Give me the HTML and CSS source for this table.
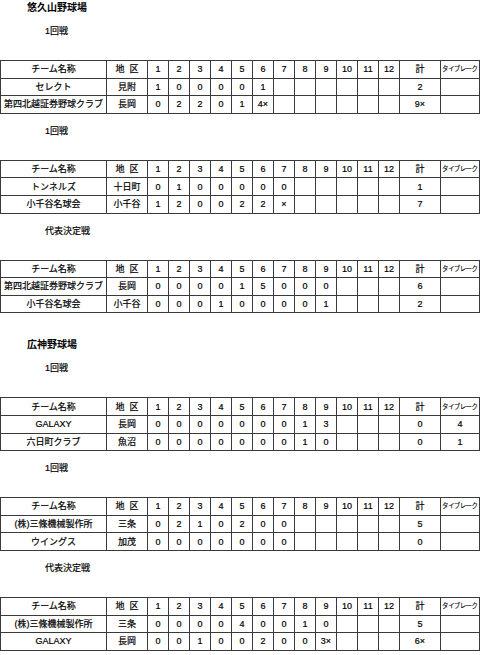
FILE: index.html
```html
<!DOCTYPE html>
<html lang="ja">
<head>
<meta charset="utf-8">
<title>試合結果</title>
<link rel="stylesheet" href="styles.css">
</head>
<body>
<section class="venue">
  <h1 class="venue-title">悠久山野球場</h1>

  <h2 class="round">1回戦</h2>
  <table class="score">
    <colgroup><col class="c-team"><col class="c-area"><col class="c-inn"><col class="c-inn"><col class="c-inn"><col class="c-inn"><col class="c-inn"><col class="c-inn"><col class="c-inn"><col class="c-inn"><col class="c-inn"><col class="c-inn"><col class="c-inn"><col class="c-inn"><col class="c-total"><col class="c-tb"></colgroup>
    <tr><th>チーム名称</th><th>地&nbsp;&nbsp;区</th><th>1</th><th>2</th><th>3</th><th>4</th><th>5</th><th>6</th><th>7</th><th>8</th><th>9</th><th>10</th><th>11</th><th>12</th><th>計</th><th class="tb">タイブレーク</th></tr>
    <tr><td>セレクト</td><td>見附</td><td>1</td><td>0</td><td>0</td><td>0</td><td>0</td><td>1</td><td></td><td></td><td></td><td></td><td></td><td></td><td>2</td><td></td></tr>
    <tr><td>第四北越証券野球クラブ</td><td>長岡</td><td>0</td><td>2</td><td>2</td><td>0</td><td>1</td><td>4×</td><td></td><td></td><td></td><td></td><td></td><td></td><td>9×</td><td></td></tr>
  </table>

  <h2 class="round">1回戦</h2>
  <table class="score">
    <colgroup><col class="c-team"><col class="c-area"><col class="c-inn"><col class="c-inn"><col class="c-inn"><col class="c-inn"><col class="c-inn"><col class="c-inn"><col class="c-inn"><col class="c-inn"><col class="c-inn"><col class="c-inn"><col class="c-inn"><col class="c-inn"><col class="c-total"><col class="c-tb"></colgroup>
    <tr><th>チーム名称</th><th>地&nbsp;&nbsp;区</th><th>1</th><th>2</th><th>3</th><th>4</th><th>5</th><th>6</th><th>7</th><th>8</th><th>9</th><th>10</th><th>11</th><th>12</th><th>計</th><th class="tb">タイブレーク</th></tr>
    <tr><td>トンネルズ</td><td>十日町</td><td>0</td><td>1</td><td>0</td><td>0</td><td>0</td><td>0</td><td>0</td><td></td><td></td><td></td><td></td><td></td><td>1</td><td></td></tr>
    <tr><td>小千谷名球会</td><td>小千谷</td><td>1</td><td>2</td><td>0</td><td>0</td><td>2</td><td>2</td><td>×</td><td></td><td></td><td></td><td></td><td></td><td>7</td><td></td></tr>
  </table>

  <h2 class="round">代表決定戦</h2>
  <table class="score">
    <colgroup><col class="c-team"><col class="c-area"><col class="c-inn"><col class="c-inn"><col class="c-inn"><col class="c-inn"><col class="c-inn"><col class="c-inn"><col class="c-inn"><col class="c-inn"><col class="c-inn"><col class="c-inn"><col class="c-inn"><col class="c-inn"><col class="c-total"><col class="c-tb"></colgroup>
    <tr><th>チーム名称</th><th>地&nbsp;&nbsp;区</th><th>1</th><th>2</th><th>3</th><th>4</th><th>5</th><th>6</th><th>7</th><th>8</th><th>9</th><th>10</th><th>11</th><th>12</th><th>計</th><th class="tb">タイブレーク</th></tr>
    <tr><td>第四北越証券野球クラブ</td><td>長岡</td><td>0</td><td>0</td><td>0</td><td>0</td><td>1</td><td>5</td><td>0</td><td>0</td><td>0</td><td></td><td></td><td></td><td>6</td><td></td></tr>
    <tr><td>小千谷名球会</td><td>小千谷</td><td>0</td><td>0</td><td>0</td><td>1</td><td>0</td><td>0</td><td>0</td><td>0</td><td>1</td><td></td><td></td><td></td><td>2</td><td></td></tr>
  </table>
</section>

<section class="venue">
  <h1 class="venue-title">広神野球場</h1>

  <h2 class="round">1回戦</h2>
  <table class="score">
    <colgroup><col class="c-team"><col class="c-area"><col class="c-inn"><col class="c-inn"><col class="c-inn"><col class="c-inn"><col class="c-inn"><col class="c-inn"><col class="c-inn"><col class="c-inn"><col class="c-inn"><col class="c-inn"><col class="c-inn"><col class="c-inn"><col class="c-total"><col class="c-tb"></colgroup>
    <tr><th>チーム名称</th><th>地&nbsp;&nbsp;区</th><th>1</th><th>2</th><th>3</th><th>4</th><th>5</th><th>6</th><th>7</th><th>8</th><th>9</th><th>10</th><th>11</th><th>12</th><th>計</th><th class="tb">タイブレーク</th></tr>
    <tr><td>GALAXY</td><td>長岡</td><td>0</td><td>0</td><td>0</td><td>0</td><td>0</td><td>0</td><td>0</td><td>1</td><td>3</td><td></td><td></td><td></td><td>0</td><td>4</td></tr>
    <tr><td>六日町クラブ</td><td>魚沼</td><td>0</td><td>0</td><td>0</td><td>0</td><td>0</td><td>0</td><td>0</td><td>1</td><td>0</td><td></td><td></td><td></td><td>0</td><td>1</td></tr>
  </table>

  <h2 class="round">1回戦</h2>
  <table class="score">
    <colgroup><col class="c-team"><col class="c-area"><col class="c-inn"><col class="c-inn"><col class="c-inn"><col class="c-inn"><col class="c-inn"><col class="c-inn"><col class="c-inn"><col class="c-inn"><col class="c-inn"><col class="c-inn"><col class="c-inn"><col class="c-inn"><col class="c-total"><col class="c-tb"></colgroup>
    <tr><th>チーム名称</th><th>地&nbsp;&nbsp;区</th><th>1</th><th>2</th><th>3</th><th>4</th><th>5</th><th>6</th><th>7</th><th>8</th><th>9</th><th>10</th><th>11</th><th>12</th><th>計</th><th class="tb">タイブレーク</th></tr>
    <tr><td>(株)三條機械製作所</td><td>三条</td><td>0</td><td>2</td><td>1</td><td>0</td><td>2</td><td>0</td><td>0</td><td></td><td></td><td></td><td></td><td></td><td>5</td><td></td></tr>
    <tr><td>ウイングス</td><td>加茂</td><td>0</td><td>0</td><td>0</td><td>0</td><td>0</td><td>0</td><td>0</td><td></td><td></td><td></td><td></td><td></td><td>0</td><td></td></tr>
  </table>

  <h2 class="round">代表決定戦</h2>
  <table class="score">
    <colgroup><col class="c-team"><col class="c-area"><col class="c-inn"><col class="c-inn"><col class="c-inn"><col class="c-inn"><col class="c-inn"><col class="c-inn"><col class="c-inn"><col class="c-inn"><col class="c-inn"><col class="c-inn"><col class="c-inn"><col class="c-inn"><col class="c-total"><col class="c-tb"></colgroup>
    <tr><th>チーム名称</th><th>地&nbsp;&nbsp;区</th><th>1</th><th>2</th><th>3</th><th>4</th><th>5</th><th>6</th><th>7</th><th>8</th><th>9</th><th>10</th><th>11</th><th>12</th><th>計</th><th class="tb">タイブレーク</th></tr>
    <tr><td>(株)三條機械製作所</td><td>三条</td><td>0</td><td>0</td><td>0</td><td>0</td><td>4</td><td>0</td><td>0</td><td>1</td><td>0</td><td></td><td></td><td></td><td>5</td><td></td></tr>
    <tr><td>GALAXY</td><td>長岡</td><td>0</td><td>0</td><td>1</td><td>0</td><td>0</td><td>2</td><td>0</td><td>0</td><td>3×</td><td></td><td></td><td></td><td>6×</td><td></td></tr>
  </table>
</section>
</body>
</html>
```

FILE: styles.css
```css
html, body {
  margin: 0;
  padding: 0;
  background: #fff;
}

body {
  font-family: "Liberation Sans", "Noto Sans CJK JP", sans-serif;
  color: #000;
  font-size: 9px;
}

.venue + .venue {
  margin-top: 24px;
}

.venue-title {
  margin: 0;
  padding-left: 27px;
  font-size: 10px;
  font-weight: bold;
  line-height: 16px;
  height: 16px;
}

.round {
  margin: 9px 0 21px;
  padding-left: 45px;
  font-size: 9px;
  font-weight: normal;
  line-height: 16px;
  height: 16px;
  -webkit-text-stroke: 0.2px #000;
}

.venue-title + .round {
  margin-top: 7px;
}

.score {
  width: 479px;
  border-collapse: collapse;
  table-layout: fixed;
}

.score th,
.score td {
  border: 1px solid #3a3a3a;
  height: 16.6px;
  padding: 0;
  text-align: center;
  font-weight: normal;
  font-size: 9px;
  line-height: 12px;
  white-space: nowrap;
  overflow: hidden;
  -webkit-text-stroke: 0.2px #000;
}

.score th.tb {
  font-size: 6.5px;
  text-align: left;
  padding-left: 1px;
  letter-spacing: -0.6px;
  -webkit-text-stroke: 0.1px #000;
}

.c-team { width: 106px; }
.c-area { width: 41px; }
.c-inn { width: 21px; }
.c-total { width: 41px; }
.c-tb { width: 39px; }
```
